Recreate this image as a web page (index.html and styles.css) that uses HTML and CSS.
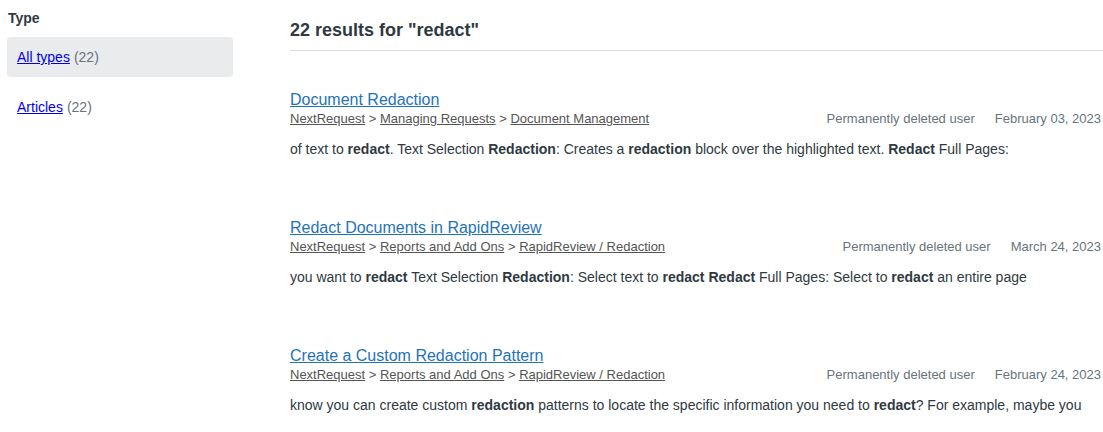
FILE: index.html
```html
<!DOCTYPE html>
<html>
<head>
<meta charset="utf-8">
<link rel="stylesheet" href="styles.css">
</head>
<body>
<div class="page">
  <aside class="sidebar">
    <h3 class="filter-title">Type</h3>
    <ul class="filter-list">
      <li class="filter-item is-active"><a href="#">All types</a> <span class="count">(22)</span></li>
      <li class="filter-item"><a href="#">Articles</a> <span class="count">(22)</span></li>
    </ul>
  </aside>
  <main class="main">
    <h1 class="results-heading">22 results for "redact"</h1>
    <ul class="results">
      <li class="result">
        <a class="result-title" href="#">Document Redaction</a>
        <div class="result-meta">
          <div class="crumbs"><a href="#">NextRequest</a> &gt; <a href="#">Managing Requests</a> &gt; <a href="#">Document Management</a></div>
          <div class="info"><span>Permanently deleted user</span><span>February 03, 2023</span></div>
        </div>
        <p class="snippet">of text to <b>redact</b>. Text Selection <b>Redaction</b>: Creates a <b>redaction</b> block over the highlighted text. <b>Redact</b> Full Pages:</p>
      </li>
      <li class="result">
        <a class="result-title" href="#">Redact Documents in RapidReview</a>
        <div class="result-meta">
          <div class="crumbs"><a href="#">NextRequest</a> &gt; <a href="#">Reports and Add Ons</a> &gt; <a href="#">RapidReview / Redaction</a></div>
          <div class="info"><span>Permanently deleted user</span><span>March 24, 2023</span></div>
        </div>
        <p class="snippet">you want to <b>redact</b> Text Selection <b>Redaction</b>: Select text to <b>redact</b> <b>Redact</b> Full Pages: Select to <b>redact</b> an entire page</p>
      </li>
      <li class="result">
        <a class="result-title" href="#">Create a Custom Redaction Pattern</a>
        <div class="result-meta">
          <div class="crumbs"><a href="#">NextRequest</a> &gt; <a href="#">Reports and Add Ons</a> &gt; <a href="#">RapidReview / Redaction</a></div>
          <div class="info"><span>Permanently deleted user</span><span>February 24, 2023</span></div>
        </div>
        <p class="snippet">know you can create custom <b>redaction</b> patterns to locate the specific information you need to <b>redact</b>? For example, maybe you</p>
      </li>
    </ul>
  </main>
</div>
</body>
</html>
```

FILE: styles.css
```css
* { box-sizing: border-box; }
html, body { margin: 0; padding: 0; background: #fff; }
body {
  font-family: "Liberation Sans", Arial, sans-serif;
  color: #2f3941;
  font-size: 14px;
}
.page {
  display: flex;
  padding-left: 7px;
}
.sidebar {
  width: 226px;
  flex: none;
}
.filter-title {
  margin: 8px 0 0 1px;
  font-size: 14px;
  line-height: 20px;
  font-weight: bold;
  color: #2f3941;
}
.filter-list {
  list-style: none;
  margin: 9px 0 0;
  padding: 0;
}
.filter-item {
  height: 40px;
  display: flex;
  align-items: center;
  padding-left: 10px;
  margin-bottom: 10px;
  border-radius: 4px;
  font-size: 14px;
  gap: 4px;
}
.filter-item.is-active { background: #e9ebed; }
.filter-item a { color: #0000ee; }
.filter-item .count { color: #68737d; }
.main {
  flex: 1;
  margin-left: 57px;
  min-width: 0;
}
.results-heading {
  margin: 19px 0 0;
  font-size: 18px;
  line-height: 22px;
  font-weight: bold;
  padding-bottom: 9px;
  border-bottom: 1px solid #d8dcde;
  color: #2f3941;
}
.results {
  list-style: none;
  margin: 0;
  padding: 39px 0 0;
  display: flex;
  flex-direction: column;
  gap: 59px;
}
.result-title {
  display: block;
  font-size: 16px;
  line-height: 20px;
  color: #1f73b7;
  text-decoration: underline;
}
.result-meta {
  display: flex;
  justify-content: space-between;
  align-items: center;
  font-size: 13px;
  line-height: 18px;
  padding-right: 2px;
}
.crumbs { color: #555; }
.crumbs a { color: #555; }
.info {
  display: flex;
  gap: 20px;
  color: #68737d;
}
.snippet {
  margin: 11px 0 0;
  font-size: 14px;
  line-height: 20px;
  color: #2f3941;
}
.snippet b { font-weight: bold; }
```
